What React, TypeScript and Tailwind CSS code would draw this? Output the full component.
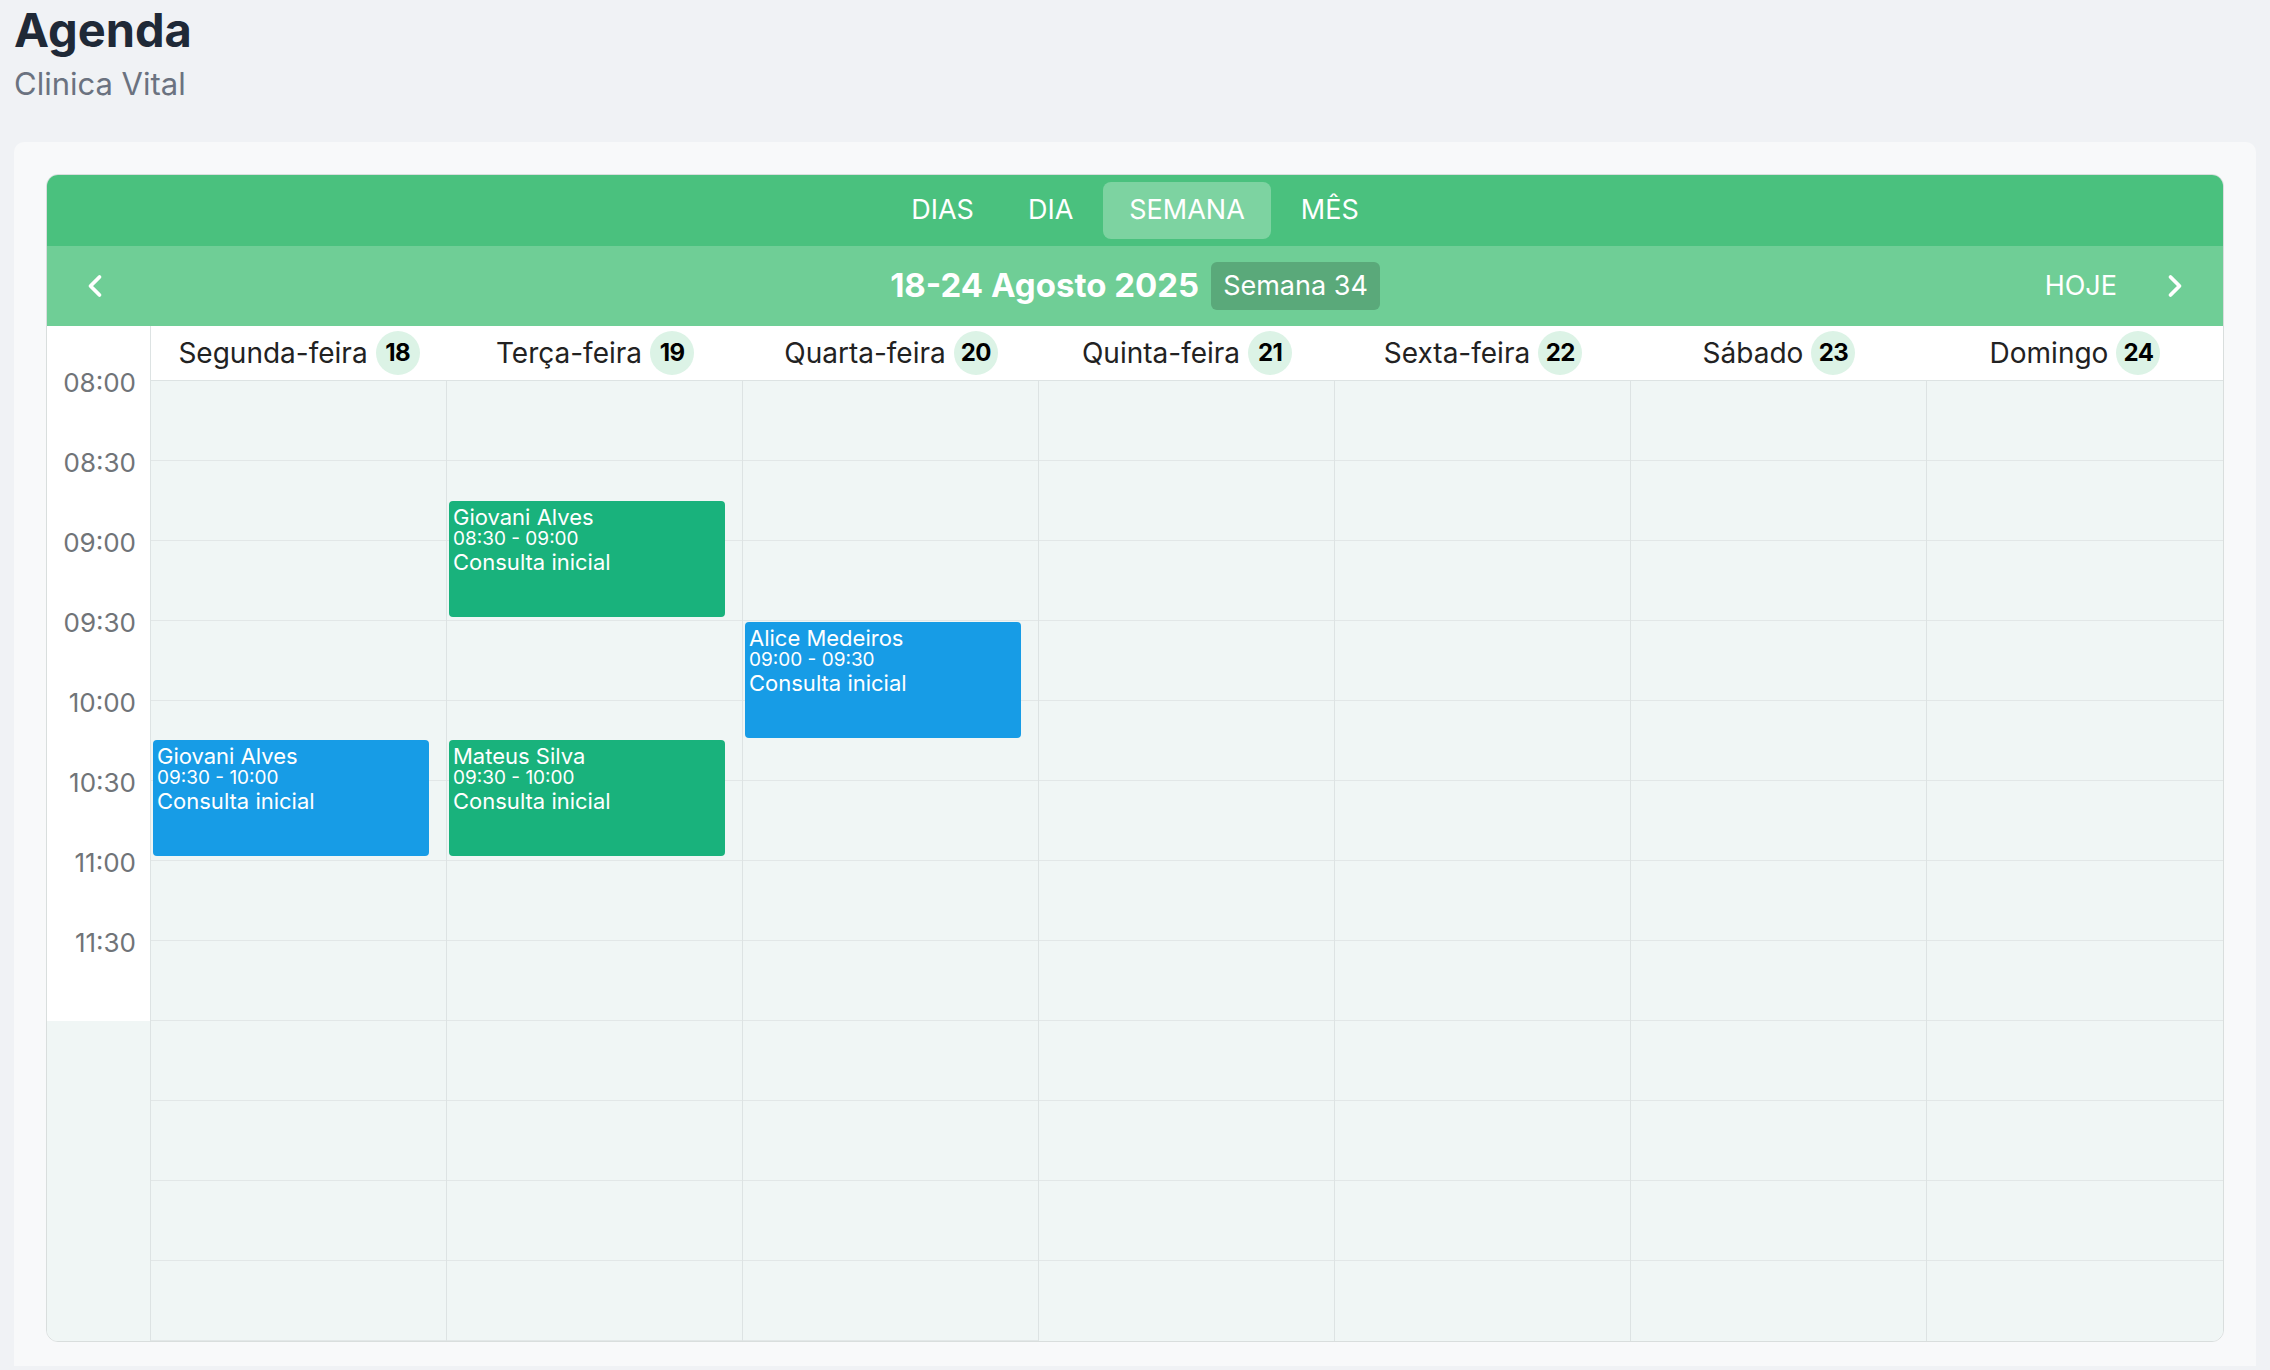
import { ChevronLeft, ChevronRight } from 'lucide-react'

const days = [
  { name: 'Segunda-feira', num: 18 },
  { name: 'Terça-feira', num: 19 },
  { name: 'Quarta-feira', num: 20 },
  { name: 'Quinta-feira', num: 21 },
  { name: 'Sexta-feira', num: 22 },
  { name: 'Sábado', num: 23 },
  { name: 'Domingo', num: 24 },
]

const times = ['08:00', '08:30', '09:00', '09:30', '10:00', '10:30', '11:00', '11:30']

const events = [
  { day: 0, top: 359, name: 'Giovani Alves', time: '09:30 - 10:00', blue: true },
  { day: 1, top: 120, name: 'Giovani Alves', time: '08:30 - 09:00', blue: false },
  { day: 1, top: 359, name: 'Mateus Silva', time: '09:30 - 10:00', blue: false },
  { day: 2, top: 241, name: 'Alice Medeiros', time: '09:00 - 09:30', blue: true },
]

export default function App() {
  return (
    <div className="min-h-[1370px] bg-[#f0f2f5] font-[Inter]">
      <div className="px-[14px] pt-[2px]">
        <h1 className="text-[47px] leading-[56px] font-bold text-[#1f2937]">Agenda</h1>
        <p className="mt-[8px] text-[31px] leading-[36px] text-[#6b7280]">Clinica Vital</p>
      </div>
      <div className="mx-[14px] mt-[40px] rounded-t-[10px] bg-[#f8f9fa] px-[32px] pt-[32px] pb-[24px]">
        <div className="overflow-hidden rounded-[12px] border border-[#d9dedd]">
          <div className="flex h-[71px] items-center justify-center gap-[6px] bg-[#4ac17e] text-[27px] text-white">
            <span className="px-[24px] py-[8px]">DIAS</span>
            <span className="px-[24px] py-[8px]">DIA</span>
            <span className="rounded-[8px] bg-[#7dd3a1] px-[26px] py-[8px]">SEMANA</span>
            <span className="px-[24px] py-[8px]">MÊS</span>
          </div>
          <div className="relative flex h-[80px] items-center justify-center bg-[#6fce96] text-white">
            <ChevronLeft className="absolute left-[30px] size-[36px]" strokeWidth={2.5} />
            <span className="text-[33px] font-bold">18-24 Agosto 2025</span>
            <span className="ml-[12px] rounded-[6px] bg-[#5aa97a] px-[12px] py-[4px] text-[27px]">Semana 34</span>
            <span className="absolute right-[106px] text-[27px]">HOJE</span>
            <ChevronRight className="absolute right-[30px] size-[36px]" strokeWidth={2.5} />
          </div>
          <div className="flex bg-[#f0f6f5]">
            <div className="w-[103px] shrink-0">
              <div className="h-[55px] bg-white" />
              <div className="h-[640px] bg-white">
                {times.map((t) => (
                  <div key={t} className="flex h-[80px] items-start justify-end">
                    <span className="-mt-[18px] mr-[14px] text-[26px] text-[#707478]">{t}</span>
                  </div>
                ))}
              </div>
              <div className="h-[320px]" />
            </div>
            <div className="flex-1 border-l border-[#dde3e3]">
              <div className="grid h-[55px] grid-cols-7 border-b border-[#dde3e3] bg-white">
                {days.map((d) => (
                  <div key={d.num} className="flex items-center justify-center gap-[8px] text-[28px] text-[#222]">
                    <span>{d.name}</span>
                    <span className="flex size-[44px] items-center justify-center rounded-full bg-[#dcf3e6] text-[24px] font-bold tracking-tight text-black">{d.num}</span>
                  </div>
                ))}
              </div>
              <div className="grid grid-cols-7">
                {days.map((d, di) => (
                  <div key={d.num} className="relative border-r border-[#dde3e3] last:border-r-0">
                    {Array.from({ length: 12 }).map((_, r) => (
                      <div key={r} className="h-[80px] border-b border-[#e2e7e7] last:border-b-0" />
                    ))}
                    {events
                      .filter((e) => e.day === di)
                      .map((e) => (
                        <div
                          key={e.name + e.top}
                          className={`absolute left-[2px] h-[116px] w-[276px] rounded-[4px] px-[4px] pt-[4px] text-white ${e.blue ? 'bg-[#179ce6]' : 'bg-[#19b27c]'}`}
                          style={{ top: e.top }}
                        >
                          <div className="text-[22px] leading-[24px]">{e.name}</div>
                          <div className="text-[19px] leading-[20px]">{e.time}</div>
                          <div className="text-[22px] leading-[26px]">Consulta inicial</div>
                        </div>
                      ))}
                  </div>
                ))}
              </div>
            </div>
          </div>
        </div>
      </div>
    </div>
  )
}
